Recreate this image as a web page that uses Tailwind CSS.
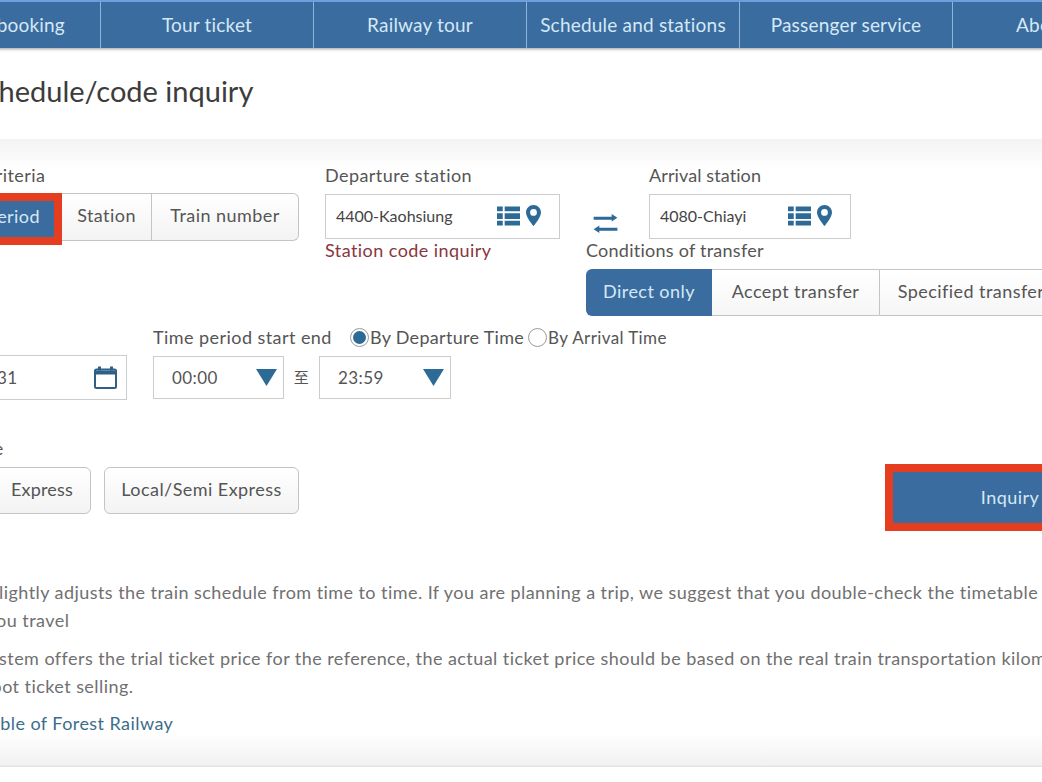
<!DOCTYPE html>
<html lang="en">
<head>
    <meta charset="UTF-8">
    <title>Schedule/code inquiry</title>
    <script src="https://cdn.jsdelivr.net/npm/@tailwindcss/browser@4"></script>
</head>
<body class="bg-white">
<div class="w-[1042px] h-[782px] overflow-hidden bg-white text-[18px] tracking-[0.44px] text-[#555] font-['Lato','Noto_Sans','Noto_Sans_CJK_TC',sans-serif]">
    <!-- nav -->
    <nav class="flex w-[1400px] -ml-[112px] h-[48px] bg-[#3a6c9f] border-t-2 border-[#6f9fe0] text-[#d5e8f5] shadow-[0_1px_3px_rgba(0,0,0,0.4)] text-[19px] tracking-[0.2px]">
        <a class="w-[213px] shrink-0 flex items-center justify-center border-r border-[#8db4dc] pl-[12px]">Online booking</a>
        <a class="w-[213px] shrink-0 flex items-center justify-center border-r border-[#8db4dc]">Tour ticket</a>
        <a class="w-[213px] shrink-0 flex items-center justify-center border-r border-[#8db4dc]">Railway tour</a>
        <a class="w-[213px] shrink-0 flex items-center justify-center border-r border-[#8db4dc]">Schedule and stations</a>
        <a class="w-[213px] shrink-0 flex items-center justify-center border-r border-[#8db4dc]">Passenger service</a>
        <a class="w-[213px] shrink-0 flex items-center justify-center pr-[10px]">About us</a>
    </nav>

    <!-- title -->
    <div class="h-[91px] flex items-start pt-[23px]">
        <h1 class="-ml-[31px] text-[29px] tracking-normal leading-[40px] text-[#3c3c3c] whitespace-nowrap">Schedule/code inquiry</h1>
    </div>

    <!-- form panel -->
    <div class="h-[628px] -ml-[130px] w-[1400px] bg-[linear-gradient(to_bottom,#f3f3f3_0,#ffffff_30px,#ffffff_594px,#f1f1f1_626px,#dddddd_628px)] pt-[24px]">
        <div class="flex items-start">
            <div class="w-[455px] shrink-0">
                <div class="pl-[56px] h-[30px] leading-[24px] whitespace-nowrap">Search criteria</div>
                <div class="flex items-start">
                    <button class="w-[192px] h-[52px] border-[8px] border-[#e53d20] bg-[#3a6c9f] text-[#d5e8f5] text-right pr-[14px] pb-[6px] relative z-10">Time period</button>
                    <button class="w-[90px] h-[48px] pb-[3px] bg-[linear-gradient(#fff,#f3f3f3)] border-y border-[#c4c4c4] border-r">Station</button>
                    <button class="w-[147px] h-[48px] pb-[3px] bg-[linear-gradient(#fff,#f3f3f3)] border border-l-0 border-[#c4c4c4] rounded-r-[6px]">Train number</button>
                </div>
            </div>
            <div class="w-[235px] shrink-0">
                <div class="h-[31px] leading-[24px]">Departure station</div>
                <div class="h-[45px] pb-[2px] border border-[#ccc] bg-white flex items-center pl-[10px] pr-[18px] text-[16px] tracking-normal text-[#444]">
                    <span class="flex-1">4400-Kaohsiung</span>
                    <svg class="w-[23px] h-[20px] mr-[6px]" viewBox="0 0 24 20" fill="#2e6a96"><path d="M0 0h6v5H0zM8 0h16v5H8zM0 7h6v6H0zM8 7h16v6H8zM0 15h6v5H0zM8 15h16v5H8z"/></svg>
                    <svg class="w-[15px] h-[21px]" viewBox="0 0 15 21" fill="#2e6a96"><path fill-rule="evenodd" d="M7.5 0C3.4 0 0 3.3 0 7.4 0 12.4 7.5 21 7.5 21S15 12.4 15 7.4C15 3.3 11.600 0 7.500 0zM7.500 4a3.400 3.400 0 1 1 0 6.800 3.400 3.400 0 0 1 0-6.800z"/></svg>
                </div>
                <a class="block -mt-[2px] text-[#8a3640] h-[26px] leading-[26px] whitespace-nowrap">Station code inquiry</a>
            </div>
            <div class="ml-[26px]">
                <div class="flex items-end">
                    <div class="w-[63px] pl-[7px] pb-[6px]">
                        <svg class="block w-[25px] h-[19px]" viewBox="0 0 25 20" fill="#2e6a96"><path d="M0 3h19V0l6 4-6 4V6H0zM25 14.500H6V12l-6 4 6 4v-2.500h19z"/></svg>
                    </div>
                    <div class="w-[202px]">
                        <div class="h-[31px] leading-[24px] tracking-[0.1px]">Arrival station</div>
                        <div class="h-[45px] pb-[2px] border border-[#ccc] bg-white flex items-center pl-[10px] pr-[18px] text-[16px] tracking-normal text-[#444]">
                            <span class="flex-1">4080-Chiayi</span>
                            <svg class="w-[23px] h-[20px] mr-[6px]" viewBox="0 0 24 20" fill="#2e6a96"><path d="M0 0h6v5H0zM8 0h16v5H8zM0 7h6v6H0zM8 7h16v6H8zM0 15h6v5H0zM8 15h16v5H8z"/></svg>
                            <svg class="w-[15px] h-[21px]" viewBox="0 0 15 21" fill="#2e6a96"><path fill-rule="evenodd" d="M7.5 0C3.4 0 0 3.3 0 7.4 0 12.4 7.5 21 7.5 21S15 12.4 15 7.4C15 3.3 11.600 0 7.500 0zM7.500 4a3.400 3.400 0 1 1 0 6.800 3.400 3.400 0 0 1 0-6.800z"/></svg>
                        </div>
                    </div>
                </div>
                <div class="h-[32px] leading-[26px] -mt-[2px] tracking-[0.25px] whitespace-nowrap">Conditions of transfer</div>
                <div class="flex h-[47px] w-[600px]">
                    <button class="w-[126px] pb-[2px] bg-[#3a6c9f] text-[#d5e8f5] rounded-l-[6px]">Direct only</button>
                    <button class="w-[167px] pb-[2px] border-y border-[#c4c4c4] bg-[linear-gradient(#fff,#f6f6f6)]">Accept transfer</button>
                    <button class="w-[190px] pb-[2px] border border-[#c4c4c4] bg-[linear-gradient(#fff,#f6f6f6)] rounded-r-[6px] whitespace-nowrap pr-[6px]">Specified transfer</button>
                </div>
            </div>
        </div>

        <div class="flex items-start mt-[7px]">
            <div class="w-[257px] shrink-0 pt-[32px]">
                <div class="h-[45px] border border-[#ccc] bg-white flex items-center justify-end pr-[9px]">
                    <span class="flex-1 pl-[48px] whitespace-nowrap text-[17px]">2019/12/31</span>
                    <svg class="w-[23px] h-[23px]" viewBox="0 0 23 23" fill="none" stroke="#2f5f85" stroke-width="2"><rect x="1" y="3.500" width="21" height="18.500" rx="1.500"/><path d="M1 6.500h21" stroke-width="4"/><path d="M5.500 0.500v4M17.500 0.500v4" stroke-width="3"/></svg>
                </div>
            </div>
            <div class="ml-[26px]">
                <div class="flex items-center h-[29px] mb-[4px] whitespace-nowrap">
                    <span class="w-[197px]">Time period start end</span>
                    <span class="w-[19px] h-[19px] rounded-full border border-[#999] flex items-center justify-center"><span class="w-[13px] h-[13px] rounded-full bg-[#2e6a96]"></span></span>
                    <span class="mr-[4px] ml-[1px] tracking-[0.3px]">By Departure Time</span>
                    <span class="w-[19px] h-[19px] rounded-full border border-[#999] bg-white"></span>
                    <span class="ml-[1px] text-[17px] tracking-[0.4px]">By Arrival Time</span>
                </div>
                <div class="flex items-center text-[17px]">
                    <div class="w-[131px] h-[43px] border border-[#ccc] bg-white flex items-center justify-between pl-[18px] pr-[6px]">
                        <span>00:00</span>
                        <svg class="w-[21px] h-[17px]" viewBox="0 0 21 17" fill="#2e6a96"><path d="M0 0h21L10.500 17z"/></svg>
                    </div>
                    <span class="w-[35px] text-center text-[15px]">至</span>
                    <div class="w-[132px] h-[43px] border border-[#ccc] bg-white flex items-center justify-between pl-[18px] pr-[6px]">
                        <span>23:59</span>
                        <svg class="w-[21px] h-[17px]" viewBox="0 0 21 17" fill="#2e6a96"><path d="M0 0h21L10.500 17z"/></svg>
                    </div>
                </div>
            </div>
        </div>

        <div class="flex items-start mt-[39px]">
            <div class="w-[429px] shrink-0">
                <div class="pl-[51px] h-[28px] leading-[18px] whitespace-nowrap">Train type</div>
                <div class="flex items-center gap-[13px] justify-end">
                    <button class="w-[140px] h-[47px] pb-[3px] border border-[#c4c4c4] rounded-[6px] bg-[linear-gradient(#fff,#f3f3f3)] text-right pr-[17px] tracking-[0.2px]">Express</button>
                    <button class="w-[195px] h-[47px] pb-[3px] border border-[#c4c4c4] rounded-[6px] bg-[linear-gradient(#fff,#f3f3f3)]">Local/Semi Express</button>
                </div>
            </div>
            <button class="ml-[586px] mt-[25px] w-[250px] h-[67px] border-[8px] border-[#e53d20] bg-[#3a6c9f] text-[#d5e8f5]">Inquiry</button>
        </div>

        <div class="mt-[47px] pl-[81px] text-[#707070] whitespace-nowrap">
            <p class="leading-[28px]">TRA slightly adjusts the train schedule from time to time. If you are planning a trip, we suggest that you double-check the timetable<span class="block -ml-[23px]">before you travel</span></p>
            <p class="leading-[28px] mt-[10px]"><span class="block -ml-[9px]">This system offers the trial ticket price for the reference, the actual ticket price should be based on the real train transportation kilometers and</span>the spot ticket selling.</p>
            <a class="block mt-[9px] -ml-[8px] leading-[28px] text-[#3c6e8a]">Timetable of Forest Railway</a>
        </div>
    </div>
</div>
</body>
</html>
